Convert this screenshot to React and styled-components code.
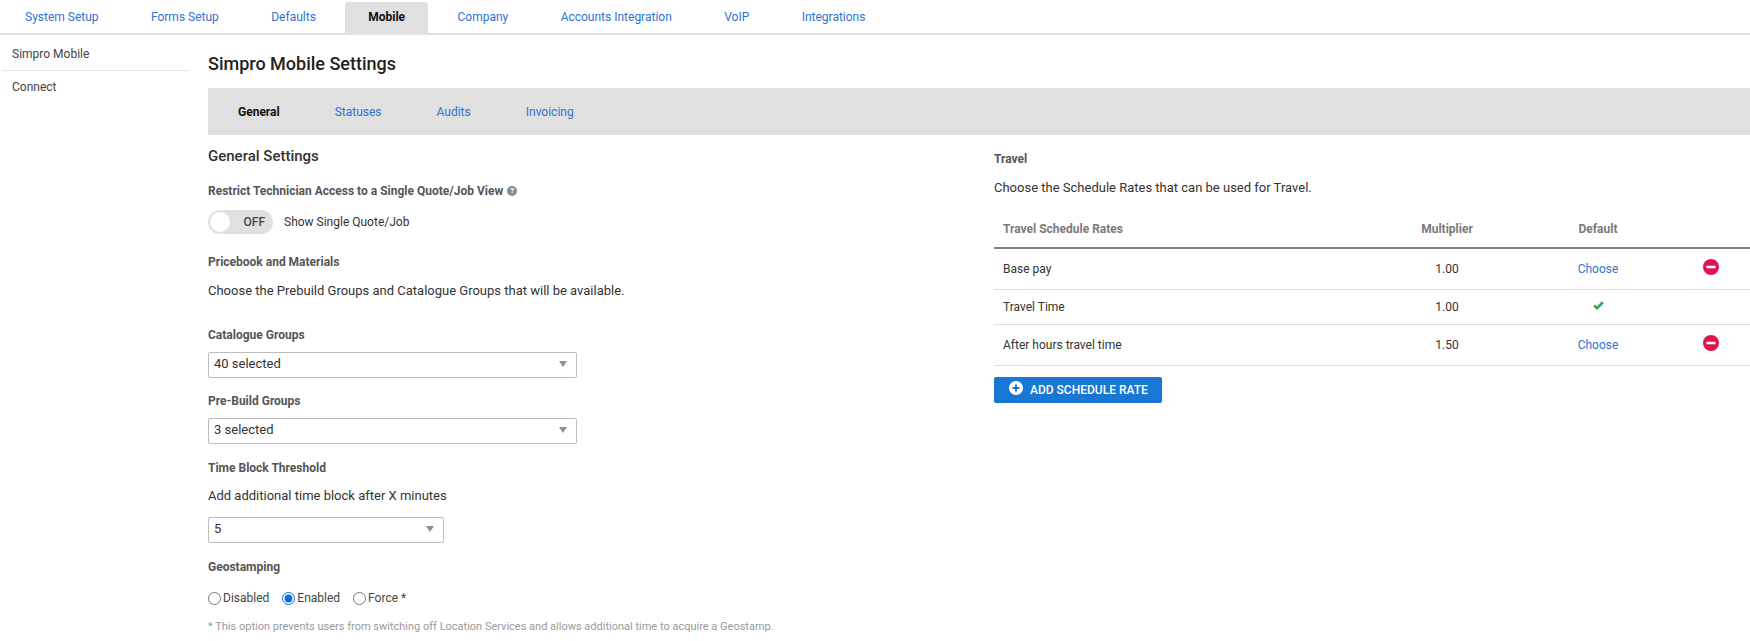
import React from "react";
import styled, { createGlobalStyle } from "styled-components";

const Global = createGlobalStyle`
  html, body { margin: 0; padding: 0; background: #fff; }
  body { font-family: Roboto, "Liberation Sans", sans-serif; font-size: 12px; color: #333; overflow: hidden; }
  * { box-sizing: border-box; }
`;

const Page = styled.div`
  width: 1750px;
  height: 641px;
  overflow: hidden;
`;

const TopNav = styled.nav`
  display: flex;
  align-items: flex-end;
  height: 35px;
  padding-left: 2px;
  border-bottom: 2px solid #e0e0e0;
`;

const TopTab = styled.a`
  display: flex;
  align-items: center;
  height: 31px;
  padding: 0 23px 1px;
  margin-right: 6.4px;
  border-radius: 3px 3px 0 0;
  color: ${(p) => (p.$active ? "#111" : "#2f74d0")};
  font-weight: ${(p) => (p.$active ? 700 : 400)};
  background: ${(p) => (p.$active ? "#e0e0e0" : "transparent")};
`;

const Body = styled.div`
  display: flex;
`;

const Sidebar = styled.aside`
  width: 187px;
  margin-left: 2px;
  padding-top: 3px;
  flex: none;
`;

const SideItem = styled.div`
  height: ${(p) => (p.$last ? 31 : 33)}px;
  padding: 0 0 0 10px;
  display: flex;
  align-items: center;
  color: #444;
  border-bottom: ${(p) => (p.$last ? "none" : "1px solid #dfe3e8")};
`;

const Main = styled.main`
  flex: 1;
  margin-left: 19px;
  min-width: 0;
`;

const Title = styled.h1`
  margin: 0;
  height: 53px;
  padding-top: 3px;
  display: flex;
  align-items: center;
  font-size: 18px;
  font-weight: 500;
  color: #222;
`;

const SubNav = styled.div`
  height: 47px;
  background: #e0e0e0;
  display: flex;
  align-items: center;
  padding-left: 30px;
  gap: 55px;
`;

const SubTab = styled.a`
  color: ${(p) => (p.$active ? "#111" : "#2f74d0")};
  font-weight: ${(p) => (p.$active ? 700 : 400)};
`;

const Columns = styled.div`
  display: grid;
  grid-template-columns: 786px 1fr;
`;

const Col = styled.section`
  display: flex;
  flex-direction: column;
`;

const SectionTitle = styled.h2`
  margin: 13px 0 0;
  font-size: 15px;
  line-height: 17px;
  font-weight: 500;
  color: #333;
`;

const Label = styled.div`
  font-weight: 700;
  line-height: 14px;
  color: #555;
  margin-top: ${(p) => p.$mt}px;
  display: flex;
  align-items: center;
  gap: 4px;
`;

const Text = styled.p`
  margin: ${(p) => p.$mt}px 0 0;
  font-size: 13px;
  line-height: 14px;
  color: #333;
`;

const Help = styled.span`
  width: 10px;
  height: 10px;
  border-radius: 50%;
  background: #8a8a8a;
  color: #fff;
  font-size: 8px;
  font-weight: 700;
  line-height: 10px;
  text-align: center;
`;

const ToggleRow = styled.div`
  display: flex;
  align-items: center;
  gap: 11px;
  margin-top: 12px;
`;

const Toggle = styled.div`
  width: 65px;
  height: 24px;
  border-radius: 12px;
  background: #e0e0e0;
  display: flex;
  align-items: center;
  padding: 0 8px 0 2px;
  justify-content: space-between;
  font-weight: 500;
  color: #444;
`;

const Knob = styled.span`
  width: 20px;
  height: 20px;
  border-radius: 50%;
  background: #fff;
`;

const Select = styled.div`
  width: ${(p) => p.$w}px;
  height: 26px;
  margin-top: ${(p) => p.$mt}px;
  border: 1px solid #bdbdbd;
  border-radius: 2px;
  padding: 0 9px 3px 5px;
  display: flex;
  align-items: center;
  justify-content: space-between;
  color: #333;
  font-size: 13px;
`;

const Caret = styled.span`
  width: 0;
  height: 0;
  border-left: 4px solid transparent;
  border-right: 4px solid transparent;
  border-top: 6px solid #8f8f8f;
`;

const Radios = styled.div`
  display: flex;
  align-items: center;
  gap: 13px;
  margin-top: 17px;
`;

const RadioLabel = styled.label`
  display: flex;
  align-items: center;
  gap: 2px;
  color: #444;
`;

const Radio = styled.input`
  margin: 0;
  width: 13px;
  height: 13px;
  accent-color: #0a6ee0;
`;

const Note = styled.p`
  margin: 15px 0 0;
  line-height: 14px;
  font-size: 11px;
  color: #999;
`;

const Table = styled.div`
  margin-top: 17px;
`;

const Row = styled.div`
  display: grid;
  grid-template-columns: 1fr 154px 148px 78px;
  align-items: center;
  height: ${(p) => p.$h}px;
  padding: 0 0 ${(p) => (p.$head ? 2 : 0)}px 9px;
  border-bottom: ${(p) => (p.$head ? "2px solid #808080" : "1px solid #e0e0e0")};
  color: ${(p) => (p.$head ? "#7a7a7a" : "#333")};
  font-weight: ${(p) => (p.$head ? 700 : 400)};
`;

const Center = styled.div`
  display: flex;
  justify-content: center;
`;

const IconCell = styled(Center)`
  margin-top: -4px;
`;

const Link = styled.a`
  color: #2f74d0;
`;

const AddButton = styled.button`
  margin-top: 11px;
  width: 168px;
  height: 26px;
  border: none;
  border-radius: 2px;
  background: #1976d2;
  color: #fff;
  font: 500 12px Roboto, sans-serif;
  display: flex;
  align-items: center;
  padding: 0 0 0 15px;
  gap: 7px;
  & > svg { margin-top: -4px; }
`;

const MinusIcon = () => (
  <svg width="16" height="16" viewBox="0 0 16 16">
    <circle cx="8" cy="8" r="8" fill="#e2114f" />
    <rect x="3.5" y="6.7" width="9" height="2.6" rx="0.6" fill="#fff" />
  </svg>
);

const PlusIcon = () => (
  <svg width="14" height="14" viewBox="0 0 14 14">
    <circle cx="7" cy="7" r="7" fill="#fff" />
    <path d="M7 3.5v7M3.5 7h7" stroke="#1976d2" strokeWidth="2" />
  </svg>
);

const CheckIcon = () => (
  <svg width="11" height="9" viewBox="0 0 11 9">
    <path d="M1.1 4.6 L4 7.2 L9.9 1.3" fill="none" stroke="#3aa655" strokeWidth="2.7" />
  </svg>
);

const tabs = ["System Setup", "Forms Setup", "Defaults", "Mobile", "Company", "Accounts Integration", "VoIP", "Integrations"];

const rows = [
  { name: "Base pay", mult: "1.00", choose: true, h: 41 },
  { name: "Travel Time", mult: "1.00", choose: false, h: 35 },
  { name: "After hours travel time", mult: "1.50", choose: true, h: 41 },
];

export default function App() {
  return (
    <Page>
      <Global />
      <TopNav>
        {tabs.map((t) => (
          <TopTab key={t} $active={t === "Mobile"}>{t}</TopTab>
        ))}
      </TopNav>
      <Body>
        <Sidebar>
          <SideItem>Simpro Mobile</SideItem>
          <SideItem $last>Connect</SideItem>
        </Sidebar>
        <Main>
          <Title>Simpro Mobile Settings</Title>
          <SubNav>
            <SubTab $active>General</SubTab>
            <SubTab>Statuses</SubTab>
            <SubTab>Audits</SubTab>
            <SubTab>Invoicing</SubTab>
          </SubNav>
          <Columns>
            <Col>
              <SectionTitle>General Settings</SectionTitle>
              <Label $mt={19}>Restrict Technician Access to a Single Quote/Job View <Help>?</Help></Label>
              <ToggleRow>
                <Toggle><Knob />OFF</Toggle>
                Show Single Quote/Job
              </ToggleRow>
              <Label $mt={21}>Pricebook and Materials</Label>
              <Text $mt={15}>Choose the Prebuild Groups and Catalogue Groups that will be available.</Text>
              <Label $mt={30}>Catalogue Groups</Label>
              <Select $w={369} $mt={10}>40 selected<Caret /></Select>
              <Label $mt={16}>Pre-Build Groups</Label>
              <Select $w={369} $mt={10}>3 selected<Caret /></Select>
              <Label $mt={17}>Time Block Threshold</Label>
              <Text $mt={14}>Add additional time block after X minutes</Text>
              <Select $w={236} $mt={14}>5<Caret /></Select>
              <Label $mt={17}>Geostamping</Label>
              <Radios>
                <RadioLabel><Radio type="radio" name="geo" readOnly />Disabled</RadioLabel>
                <RadioLabel><Radio type="radio" name="geo" defaultChecked />Enabled</RadioLabel>
                <RadioLabel><Radio type="radio" name="geo" readOnly />Force *</RadioLabel>
              </Radios>
              <Note>* This option prevents users from switching off Location Services and allows additional time to acquire a Geostamp.</Note>
            </Col>
            <Col>
              <Label $mt={17}>Travel</Label>
              <Text $mt={15}>Choose the Schedule Rates that can be used for Travel.</Text>
              <Table>
                <Row $head $h={37}>
                  <div>Travel Schedule Rates</div>
                  <Center>Multiplier</Center>
                  <Center>Default</Center>
                  <div />
                </Row>
                {rows.map((r) => (
                  <Row key={r.name} $h={r.h}>
                    <div>{r.name}</div>
                    <Center>{r.mult}</Center>
                    {r.choose ? <Center><Link>Choose</Link></Center> : <IconCell><CheckIcon /></IconCell>}
                    <IconCell>{r.choose ? <MinusIcon /> : null}</IconCell>
                  </Row>
                ))}
              </Table>
              <AddButton><PlusIcon />ADD SCHEDULE RATE</AddButton>
            </Col>
          </Columns>
        </Main>
      </Body>
    </Page>
  );
}
